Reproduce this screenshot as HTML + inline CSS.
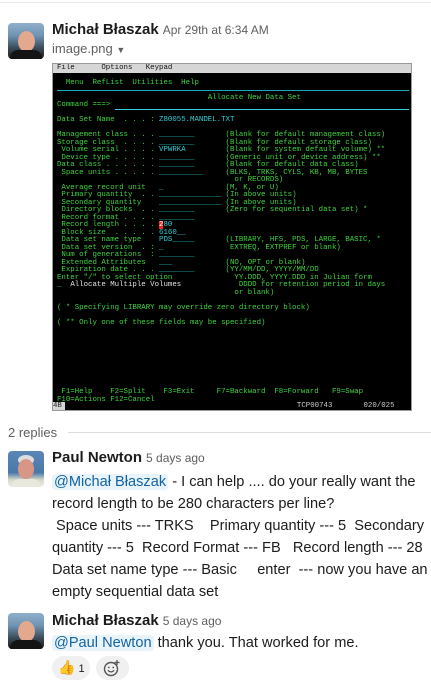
<!DOCTYPE html>
<html><head><meta charset="utf-8">
<style>
*{margin:0;padding:0;box-sizing:border-box}
body{width:431px;height:684px;background:#fff;font-family:"Liberation Sans",sans-serif;color:#1d1c1d;position:relative;overflow:hidden}
.abs{position:absolute}
.av{position:absolute;left:8px;width:36px;height:36px;border-radius:4px;overflow:hidden}
.name{font-weight:bold;font-size:15px;color:#1d1c1d}
.time{font-size:12px;color:#616061;font-weight:normal;margin-left:4px}
.body{font-size:14.6px;color:#1d1c1d;line-height:22px;white-space:nowrap}
.men{background:#e8f3fa;color:#1264a3;border-radius:3px;padding:0 2px}
#term{position:absolute;left:52px;top:63px;width:360px;height:348px;background:#000;border:1px solid #9a9a9a;overflow:hidden}
#term pre{position:absolute;left:4px;font-family:"Liberation Mono",monospace;font-size:7.4px;line-height:7.5px;color:#3fd43f;white-space:pre}
.c{color:#2fd0d8}.b{color:#3a8ff0}.w{color:#e0e0e0}.r{background:#e22;color:#fff}
</style></head><body>
<div class="abs" style="left:0;top:2px;width:431px;height:1px;background:#e6e6e6"></div>

<div class="av" style="top:23px;background:linear-gradient(180deg,#8fb0cc 0%,#6f93b3 35%,#3a4a58 70%,#1c1c1c 100%)">
 <div class="abs" style="left:10px;top:8px;width:17px;height:21px;border-radius:50%;background:#e2a98f"></div>
 <div class="abs" style="left:2px;top:27px;width:32px;height:12px;border-radius:8px 8px 0 0;background:#141414"></div>
</div>
<div class="abs" style="left:52px;top:21px"><span class="name">Michał Błaszak</span><span class="time">Apr 29th at 6:34 AM</span></div>
<div class="abs" style="left:52px;top:41px;font-size:13px;color:#616061">image.png <span style="font-size:9px">▼</span></div>

<div id="term">
 <div class="abs" style="left:0;top:0;width:360px;height:9px;background:#d6d6d6"></div>
 <pre style="top:1px;color:#111">File      Options   Keypad</pre>
 <pre class="w" style="top:16px">  Menu  RefList  Utilities  Help</pre>
 <div class="abs" style="left:4px;top:26px;width:352px;height:1px;background:#1aa8b8"></div>
 <pre class="b" style="top:31px">                                  Allocate New Data Set</pre>
 <pre style="top:38px">Command ===> </pre>
 <div class="abs" style="left:62px;top:45px;width:294px;height:1px;background:#2fd0d8"></div>
<pre style="top:53px">Data Set Name  . . . : <span class="c">Z80055.MANDEL.TXT</span>

Management class . . . <span class="c">________</span>       (Blank for default management class)
Storage class  . . . . <span class="c">________</span>       (Blank for default storage class)
 Volume serial . . . . <span class="c">VPWRKA</span>         (Blank for system default volume) **
 Device type . . . . . <span class="c">________</span>       (Generic unit or device address) **
Data class . . . . . . <span class="c">________</span>       (Blank for default data class)
 Space units . . . . . <span class="c">__________</span>     (BLKS, TRKS, CYLS, KB, MB, BYTES
                                        or RECORDS)
 Average record unit   <span class="c">_</span>              (M, K, or U)
 Primary quantity  . . <span class="c">______________</span> (In above units)
 Secondary quantity    <span class="c">______________</span> (In above units)
 Directory blocks  . . <span class="c">________</span>       (Zero for sequential data set) *
 Record format . . . . <span class="c">________</span>
 Record length . . . . <span class="r">2</span><span class="c">80</span>
 Block size  . . . . . <span class="c">6160__</span>
 Data set name type    <span class="c">PDS_____</span>       (LIBRARY, HFS, PDS, LARGE, BASIC, *
 Data set version  . : <span class="c">_</span>               EXTREQ, EXTPREF or blank)
 Num of generations  : <span class="c">________</span>
 Extended Attributes   <span class="c">___</span>            (NO, OPT or blank)
 Expiration date . . . <span class="c">________</span>       (YY/MM/DD, YYYY/MM/DD
Enter "/" to select option              YY.DDD, YYYY.DDD in Julian form
<span class="c">_</span>  <span class="w">Allocate Multiple Volumes</span>             DDDD for retention period in days
                                        or blank)

( * Specifying LIBRARY may override zero directory block)

( ** Only one of these fields may be specified)</pre>
 <pre class="b" style="top:325px"> F1=Help    F2=Split    F3=Exit     F7=Backward  F8=Forward   F9=Swap
F10=Actions F12=Cancel</pre>
 <div class="abs" style="left:0;top:338px;width:12px;height:8px;background:#d6d6d6"></div>
 <pre style="top:339px;left:0;color:#ccc"><span style="color:#222">4B</span>                                                     TCP00743       020/025</pre>
</div>

<div class="abs" style="left:8px;top:425px;font-size:13px;color:#616061">2 replies</div>
<div class="abs" style="left:68px;top:432px;width:363px;height:1px;background:#dddddd"></div>

<div class="av" style="top:451px;background:linear-gradient(180deg,#5b87b5 0%,#4a78a8 60%,#d8d8c8 80%,#eee 100%)">
 <div class="abs" style="left:10px;top:4px;width:16px;height:10px;border-radius:50%;background:#ddd"></div>
 <div class="abs" style="left:10px;top:8px;width:16px;height:20px;border-radius:50%;background:#d99686"></div>
 <div class="abs" style="left:3px;top:28px;width:30px;height:10px;border-radius:8px 8px 0 0;background:#e8e8dc"></div>
</div>
<div class="abs" style="left:52px;top:449px"><span class="name">Paul Newton</span><span class="time">5 days ago</span></div>
<div class="abs body" style="left:52px;top:471px">
<div><span class="men">@Michał Błaszak</span> - I can help .... do your really want the</div>
<div>record length to be 280 characters per line?</div>
<div>&nbsp;Space units --- TRKS &nbsp;&nbsp; Primary quantity --- 5 &nbsp;Secondary</div>
<div>quantity --- 5 &nbsp;Record Format --- FB &nbsp; Record length --- 28</div>
<div>Data set name type --- Basic &nbsp;&nbsp;&nbsp; enter &nbsp;--- now you have an</div>
<div>empty sequential data set</div>
</div>

<div class="av" style="top:613px;background:linear-gradient(180deg,#8fb0cc 0%,#6f93b3 35%,#3a4a58 70%,#1c1c1c 100%)">
 <div class="abs" style="left:10px;top:8px;width:17px;height:21px;border-radius:50%;background:#e2a98f"></div>
 <div class="abs" style="left:2px;top:27px;width:32px;height:12px;border-radius:8px 8px 0 0;background:#141414"></div>
</div>
<div class="abs" style="left:52px;top:612px"><span class="name">Michał Błaszak</span><span class="time">5 days ago</span></div>
<div class="abs body" style="left:52px;top:632px"><span class="men">@Paul Newton</span> thank you. That worked for me.</div>

<div class="abs" style="left:52px;top:656px;width:38px;height:24px;border-radius:12px;background:#f0f0f0;font-size:11px;color:#1d1c1d;line-height:24px;padding-left:6px">
 <span style="font-size:14px;color:#f4b400;font-family:'DejaVu Sans',sans-serif">👍</span> 1
</div>
<div class="abs" style="left:96px;top:656px;width:33px;height:24px;border-radius:12px;background:#f0f0f0">
 <svg width="33" height="24" viewBox="0 0 33 24"><circle cx="15" cy="13" r="6.5" fill="none" stroke="#555" stroke-width="1.4"/><circle cx="12.8" cy="11.5" r="0.9" fill="#555"/><circle cx="17.2" cy="11.5" r="0.9" fill="#555"/><path d="M11.8 14.3 Q15 17.5 18.2 14.3" fill="none" stroke="#555" stroke-width="1.3"/><path d="M21 4v5M18.5 6.5h5" stroke="#555" stroke-width="1.3"/></svg>
</div>
</body></html>
